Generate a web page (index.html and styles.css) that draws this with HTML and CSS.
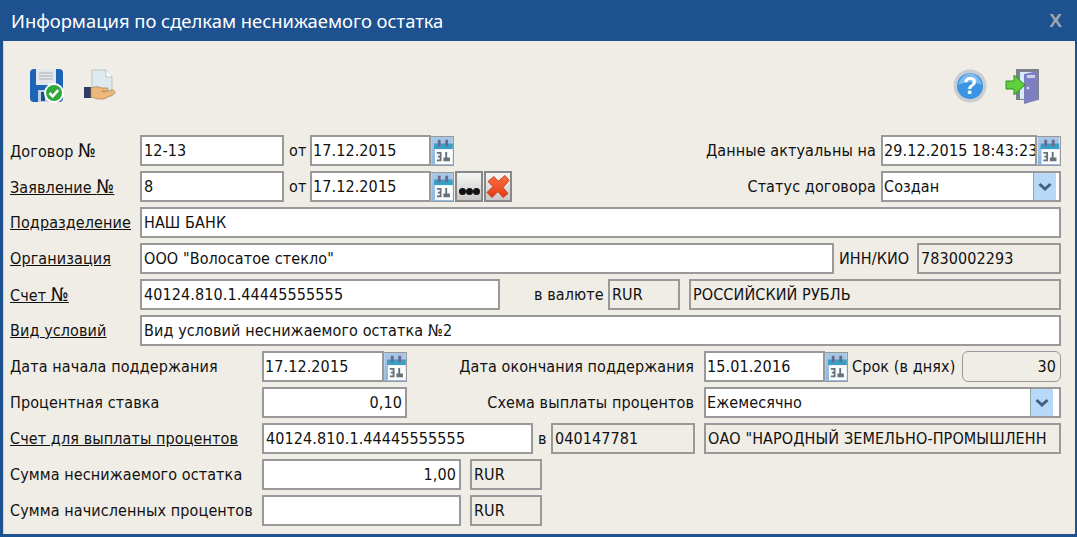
FILE: index.html
```html
<!DOCTYPE html>
<html lang="en">
<head>
    <meta charset="UTF-8">
    <title>Информация по сделкам</title>
    <link rel="stylesheet" href="styles.css">
</head>
<body>
    <svg class="defs" width="0" height="0">
        <defs>
            <linearGradient id="calbg" x1="0" y1="0" x2="0" y2="1"><stop offset="0" stop-color="#a9c8e8"/><stop offset="1" stop-color="#8fb6de"/></linearGradient>
            <linearGradient id="xred" x1="0" y1="0" x2="0" y2="1"><stop offset="0" stop-color="#ff7040"/><stop offset="1" stop-color="#e23a16"/></linearGradient>
            <symbol id="cal" viewBox="0 0 23 30">
                <rect width="23" height="30" fill="url(#calbg)"/>
                <rect x="3" y="7" width="20" height="6" fill="#3a9fc6"/>
                <rect x="4" y="13" width="19" height="16" fill="#fbfcfd"/>
                <path d="M7 3h3v7H7zM15 3h3v7h-3z" fill="#6a6a88"/>
                <path d="M6 16h5v10H6v-2h3v-2H7v-2h2v-2H6zM15 16h2v6h3v4h-7v-4h2z" fill="#66717c"/>
            </symbol>
            <symbol id="chev" viewBox="0 0 14 10">
                <path d="M1.500 2 L7 7 L12.500 2" fill="none" stroke="#44607f" stroke-width="3"/>
            </symbol>
        </defs>
    </svg>
    <div class="dialog">
        <div class="titlebar">
            <span class="title">Информация по сделкам неснижаемого остатка</span>
            <span class="close">X</span>
        </div>
        <div class="body">
            <div class="toolbar">
                <svg class="tool" viewBox="0 0 36 36">
                    <rect x="1" y="1" width="33" height="33" rx="4" fill="#1f63b4"/>
                    <rect x="7" y="1" width="20" height="16" fill="#e3e6ea"/>
                    <path d="M10 5h14M10 8h14M10 11h14" stroke="#a9b0b8"/>
                    <rect x="9" y="22" width="16" height="12" fill="#bcd0e6"/>
                    <rect x="12" y="24" width="4" height="9" fill="#1f4f8c"/>
                    <circle cx="25" cy="25" r="10" fill="#fff"/>
                    <circle cx="25" cy="25" r="8" fill="#32a83c"/>
                    <path d="M20.500 25l3.200 3.400 5.500-6.200" fill="none" stroke="#fff" stroke-width="2.600"/>
                </svg>
                <svg class="tool second" viewBox="0 0 36 36">
                    <path d="M9 2h14l6 7v19H9z" fill="#dfeaf0" stroke="#b5c6c4"/>
                    <path d="M23 2v7h6" fill="#fff" stroke="#b5c6c4"/>
                    <rect x="1" y="19" width="7" height="11" fill="#2f3a66"/>
                    <path d="M8 20c4-2 8-1 11 0h5c2 0 1 3-1 3h-4l2 1 8-2c3 0 4 3 2 4l-10 5H15l-7-2z" fill="#eeb87c" stroke="#a97b4a" stroke-width=".7"/>
                </svg>
                <div class="grow"></div>
                <svg class="tool" viewBox="0 0 36 36">
                    <circle cx="17" cy="18" r="16.500" fill="#c9cdd1"/>
                    <circle cx="17" cy="18" r="13" fill="#3b93e4"/>
                    <path d="M5 17c2-8 8-12 12-12s10 4 12 12c-8-4-16-4-24 0z" fill="#7cb9f0"/>
                    <text x="17" y="26" class="q">?</text>
                </svg>
                <svg class="tool exit" viewBox="0 0 36 36">
                    <rect x="11" y="1" width="23" height="31" fill="#7c8088"/>
                    <rect x="15" y="4" width="15" height="27" fill="#d6ecfa"/>
                    <path d="M19 6l14-3v29l-14 4z" fill="#7d7fc0"/>
                    <rect x="22" y="7" width="8" height="3" fill="#cfd0ee"/>
                    <circle cx="23" cy="20" r="1.300" fill="#dde"/>
                    <path d="M1 13h8V7l11 10-11 10v-6H1z" fill="#5fd03c" stroke="#2e8f20"/>
                </svg>
            </div>

            <div class="row">
                <span class="label w-main">Договор <span class="no">№</span></span>
                <div class="field w144">12-13</div>
                <span class="txt ot">от</span>
                <div class="field date w121">17.12.2015</div>
                <svg class="cal"><use href="#cal"/></svg>
                <span class="label push">Данные актуальны на</span>
                <div class="field date w156">29.12.2015 18:43:23</div>
                <svg class="cal wide"><use href="#cal"/></svg>
            </div>
            <div class="row">
                <span class="label link w-main">Заявление <span class="no">№</span></span>
                <div class="field w144">8</div>
                <span class="txt ot">от</span>
                <div class="field date w121">17.12.2015</div>
                <svg class="cal"><use href="#cal"/></svg>
                <div class="btn dots"><i></i><i></i><i></i></div>
                <div class="btn del">
                    <svg viewBox="0 0 24 24" width="25" height="25"><path d="M2 7l6-5 4 5 7-6 4 5-6 7 5 6-5 4-5-6-6 6-5-5 6-6z" fill="url(#xred)" stroke="#c8401c"/></svg>
                </div>
                <span class="label push">Статус договора</span>
                <div class="field date select w180">Создан<span class="arrow"><svg><use href="#chev"/></svg></span></div>
            </div>
            <div class="row">
                <span class="label link w-main">Подразделение</span>
                <div class="field grow">НАШ БАНК</div>
            </div>
            <div class="row">
                <span class="label link w-main">Организация</span>
                <div class="field w694">ООО "Волосатое стекло"</div>
                <span class="txt inn">ИНН/КИО</span>
                <div class="field ro grow">7830002293</div>
            </div>
            <div class="row">
                <span class="label link w-main">Счет <span class="no">№</span></span>
                <div class="field w360">40124.810.1.44445555555</div>
                <span class="txt cur">в валюте</span>
                <div class="field ro w72">RUR</div>
                <div class="field ro grow gap9">РОССИЙСКИЙ РУБЛЬ</div>
            </div>
            <div class="row">
                <span class="label link w-main">Вид условий</span>
                <div class="field grow">Вид условий неснижаемого остатка №2</div>
            </div>
            <div class="row">
                <span class="label w-long">Дата начала поддержания</span>
                <div class="field date w122">17.12.2015</div>
                <svg class="cal"><use href="#cal"/></svg>
                <span class="label right r-mid">Дата окончания поддержания</span>
                <div class="field date w121">15.01.2016</div>
                <svg class="cal"><use href="#cal"/></svg>
                <span class="txt term">Срок (в днях)</span>
                <div class="field ro round num grow">30</div>
            </div>
            <div class="row">
                <span class="label w-long">Процентная ставка</span>
                <div class="field num w145">0,10</div>
                <span class="label right r-mid">Схема выплаты процентов</span>
                <div class="field date select inset grow">Ежемесячно<span class="arrow"><svg><use href="#chev"/></svg></span></div>
            </div>
            <div class="row">
                <span class="label link w-long">Счет для выплаты процентов</span>
                <div class="field w271">40124.810.1.44445555555</div>
                <span class="txt v">в</span>
                <div class="field ro w144">040147781</div>
                <div class="field ro grow gap9">ОАО "НАРОДНЫЙ ЗЕМЕЛЬНО-ПРОМЫШЛЕНН</div>
            </div>
            <div class="row">
                <span class="label w-long">Сумма неснижаемого остатка</span>
                <div class="field num w199">1,00</div>
                <div class="field ro w72 gap9">RUR</div>
            </div>
            <div class="row">
                <span class="label w-long">Сумма начисленных процентов</span>
                <div class="field w199"></div>
                <div class="field ro w72 gap9">RUR</div>
            </div>
        </div>
    </div>
</body>
</html>
```

FILE: styles.css
```css
* {
    box-sizing: border-box;
}

html, body {
    margin: 0;
    height: 100%;
    overflow: hidden;
}

body {
    font-family: "DejaVu Sans Condensed", "Noto Sans", sans-serif;
    font-size: 16px;
    letter-spacing: 0.1px;
    color: #111;
    background: #fff;
}

.defs {
    display: block;
    height: 0;
}

.dialog {
    width: 1077px;
    height: 537px;
    background: #1d5190;
    padding: 0 2px 3px 3px;
    display: flex;
    flex-direction: column;
}

.titlebar {
    height: 41px;
    margin: 0 -2px 0 -3px;
    padding: 0 15px 0 11px;
    display: flex;
    align-items: center;
    justify-content: space-between;
    flex: none;
}

.title {
    color: #fff;
    font-family: "Noto Sans", sans-serif;
    font-size: 18.4px;
    letter-spacing: 0;
}

.close {
    color: #a0a8ae;
    font-family: "Liberation Sans", sans-serif;
    font-size: 19px;
    font-weight: bold;
}

.body {
    flex: 1;
    background: #f0ede6;
    padding: 0 14px 0 6px;
    border-left: 1px solid #d8d4cc;
}

.toolbar {
    height: 94px;
    padding: 27px 0 0 19px;
    display: flex;
    align-items: flex-start;
}

.tool {
    width: 36px;
    height: 36px;
    flex: none;
}

.tool.second {
    margin-left: 18px;
}

.tool.exit {
    margin-left: 16px;
    margin-right: 20px;
}

.q {
    font-family: "Liberation Sans", sans-serif;
    font-size: 23px;
    font-weight: bold;
    fill: #fff;
    text-anchor: middle;
}

.grow {
    flex: 1;
    min-width: 0;
}

.row {
    display: flex;
    align-items: center;
    height: 31px;
    margin-bottom: 5px;
}

.label, .txt {
    white-space: nowrap;
    flex: none;
}

.label.right {
    text-align: right;
}

.link {
    text-decoration: underline;
}

.no {
    font-size: 19px;
    line-height: 1;
}

.w-main {
    width: 130px;
}

.w-long {
    width: 252px;
}

.field {
    height: 31px;
    flex: none;
    background: #fff;
    border: 2px solid #999;
    padding: 0 3px 0 2px;
    line-height: 27px;
    white-space: nowrap;
    overflow: hidden;
}

.grow.field {
    flex: 1;
}

.date {
    padding-left: 1px;
    padding-right: 0;
}

.ro {
    background: #f0ede6;
}

.round {
    border-radius: 6px;
    border-width: 1px;
    line-height: 29px;
    padding-right: 4px;
}

.num {
    text-align: right;
}

.select {
    position: relative;
}

.arrow {
    position: absolute;
    top: 0;
    right: 3px;
    bottom: 0;
    width: 23px;
    background: #b8d8f8;
    border-left: 1px solid #8aa;
    display: flex;
    align-items: center;
    justify-content: center;
}

.inset .arrow {
    right: 6px;
}

.arrow svg {
    width: 14px;
    height: 10px;
}

.cal {
    width: 23px;
    height: 30px;
    flex: none;
    border: 1px solid #999;
    border-left: 0;
}

.cal.wide {
    width: 24px;
}

.btn {
    width: 28px;
    height: 31px;
    flex: none;
    background: linear-gradient(#f6f6f4, #c9c9c7);
    border: 2px solid #888;
    display: flex;
    align-items: center;
    justify-content: center;
}

.dots {
    align-items: flex-end;
    padding-bottom: 5px;
    margin-left: 1px;
}

.dots i {
    width: 7px;
    height: 7px;
    border-radius: 50%;
    background: #111;
}

.del {
    margin-left: 1px;
}

.ot {
    margin: 0 5px;
    width: 16px;
}

.inn {
    margin: 0 4px 0 5px;
    width: 74px;
}

.cur {
    margin: 0 4px 0 34px;
    width: 70px;
}

.term {
    margin: 0 4px;
    width: 106px;
}

.v {
    margin: 0 5px;
    width: 8px;
}

.gap9 {
    margin-left: 9px;
}

.w72 { width: 72px; }
.w121 { width: 121px; }
.w122 { width: 122px; }
.w144 { width: 144px; }
.w145 { width: 145px; }
.w156 { width: 156px; }
.w180 { width: 180px; }
.w199 { width: 199px; }
.w271 { width: 271px; }
.w360 { width: 360px; }
.w694 { width: 694px; }

.push {
    margin-left: auto;
    margin-right: 5px;
}

.r-mid {
    width: 287px;
    margin-right: 10px;
}
```
